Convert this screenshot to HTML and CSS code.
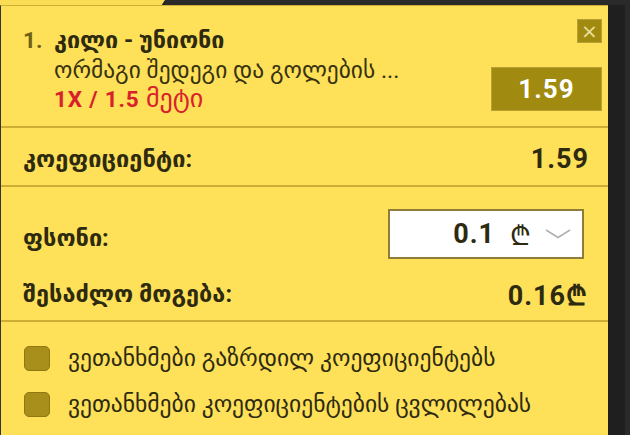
FILE: index.html
```html
<!DOCTYPE html>
<html lang="ka">
<head>
  <meta charset="UTF-8">
  <meta name="viewport" content="width=device-width, initial-scale=1.0">
  <title>Betslip</title>
  <link rel="stylesheet" href="styles.css">
</head>
<body>
  <div class="page">
    <div class="topbar">
      <div class="tab"></div>
      <div class="tab-rest"></div>
    </div>
    <div class="main">
      <div class="slip">
        <div class="event">
          <div class="event-head">
            <span class="num">1.</span>
            <span class="teams">კილი - უნიონი</span>
            <button class="close">&#215;</button>
          </div>
          <div class="event-body">
            <div class="event-info">
              <div class="market">ორმაგი შედეგი და გოლების ...</div>
              <div class="pick"><b>1X / 1.5</b> მეტი</div>
            </div>
            <div class="odd-box">1.59</div>
          </div>
        </div>

        <div class="row total">
          <span class="label">კოეფიციენტი:</span>
          <span class="value">1.59</span>
        </div>

        <div class="stake">
          <div class="row stake-row">
            <span class="label">ფსონი:</span>
            <div class="stake-input">
              <span class="amount">0.1</span>
              <span class="lari">₾</span>
              <svg class="chevron" width="26" height="10" viewBox="0 0 26 10">
                <path d="M1 1 L13 8.5 L25 1" fill="none" stroke="#b0b0b0" stroke-width="1.5"/>
              </svg>
            </div>
          </div>
          <div class="row win-row">
            <span class="label">შესაძლო მოგება:</span>
            <span class="value">0.16<span class="lari-bold">₾</span></span>
          </div>
        </div>

        <div class="options">
          <label class="option"><span class="check"></span>ვეთანხმები გაზრდილ კოეფიციენტებს</label>
          <label class="option"><span class="check"></span>ვეთანხმები კოეფიციენტების ცვლილებას</label>
        </div>
      </div>
      <div class="side"></div>
    </div>
  </div>
</body>
</html>
```

FILE: styles.css
```css
body {
  margin: 0;
  background-color: #222;
  font-family: Roboto, "DejaVu Sans", sans-serif;
  color: #2d2a10;
}

.page {
  width: 630px;
  height: 435px;
  overflow: hidden;
}

.topbar {
  display: flex;
  height: 5px;
}

.tab {
  width: 165px;
  background-color: #fbdc55;
  clip-path: polygon(0 0, 100% 0, 98% 100%, 0 100%);
}

.tab-rest {
  flex: 1;
  background-color: #2a2a2a;
}

.main {
  display: flex;
}

.slip {
  width: 608px;
  height: 430px;
  box-sizing: border-box;
  background-color: #fee059;
  border-left: 1px solid #34342a;
  border-top: 1px solid #cfb037;
}

.side {
  flex: 1;
  background-color: #1f1f1f;
  border-right: 5px solid #2a2a2a;
}

/* event */
.event {
  padding: 13px 6px 12px 22px;
  border-bottom: 2px solid #cdae35;
}

.event-head {
  display: flex;
  align-items: flex-start;
  height: 38px;
}

.num {
  width: 31px;
  margin-top: 6px;
  line-height: 30px;
  font-size: 22.5px;
  font-weight: bold;
  color: #6d6114;
}

.teams {
  flex: 1;
  margin-top: 6px;
  line-height: 30px;
  font-size: 23.3px;
  font-weight: bold;
}

.close {
  width: 25px;
  height: 24px;
  padding: 0;
  border: 1px solid #b9a233;
  background-color: #a08a10;
  color: #eadf9c;
  font-family: "DejaVu Sans", sans-serif;
  font-size: 20px;
  line-height: 20px;
  cursor: pointer;
}

.event-body {
  display: flex;
  align-items: flex-start;
  padding-left: 31px;
}

.event-info {
  flex: 1;
}

.market {
  font-size: 23.4px;
  line-height: 26px;
  color: #37320f;
}

.pick {
  color: #d8212b;
  font-size: 26px;
  line-height: 30px;
}

.pick b {
  font-size: 22.5px;
  letter-spacing: 0.8px;
}

.odd-box {
  width: 111px;
  height: 44px;
  margin-top: 10px;
  box-sizing: border-box;
  border: 1px solid #b9a233;
  background-color: #a08a10;
  color: #fff;
  font-size: 26px;
  font-weight: bold;
  letter-spacing: 1px;
  display: flex;
  align-items: center;
  justify-content: center;
}

/* rows */
.row {
  display: flex;
  align-items: center;
  justify-content: space-between;
  padding: 0 19px 0 22px;
}

.label {
  font-size: 23.5px;
  font-weight: bold;
}

.value {
  font-size: 27px;
  font-weight: bold;
  letter-spacing: 1px;
}

.total {
  height: 52px;
  padding-top: 5px;
  border-bottom: 2px solid #cdae35;
}

.stake {
  padding: 22px 0 1px;
  border-bottom: 2px solid #cdae35;
}

.stake-row {
  height: 50px;
  padding-right: 24px;
}

.stake-row .label {
  margin-top: 8px;
}

.win-row {
  height: 50px;
  margin-top: 10px;
  padding-right: 21px;
}

.stake-input {
  width: 196px;
  height: 50px;
  box-sizing: border-box;
  border: 2px solid #8e7e3a;
  background-color: #fff;
  display: flex;
  align-items: center;
  justify-content: flex-end;
  padding-right: 11px;
}

.amount {
  font-size: 27px;
  font-weight: bold;
  letter-spacing: 1px;
}

.lari {
  font-family: "DejaVu Sans", sans-serif;
  font-size: 27px;
  margin: 0 14px 0 15px;
}

.lari-bold {
  font-family: "DejaVu Sans", sans-serif;
  letter-spacing: 0;
}

/* options */
.options {
  padding: 13px 22px 0 23px;
}

.option {
  display: flex;
  align-items: center;
  gap: 18px;
  height: 46px;
  font-size: 23.5px;
  color: #2d2a10;
}

.check {
  width: 26px;
  height: 25px;
  box-sizing: border-box;
  border: 1px solid #8f780f;
  border-radius: 5px;
  background-color: #a88f1b;
}
```
